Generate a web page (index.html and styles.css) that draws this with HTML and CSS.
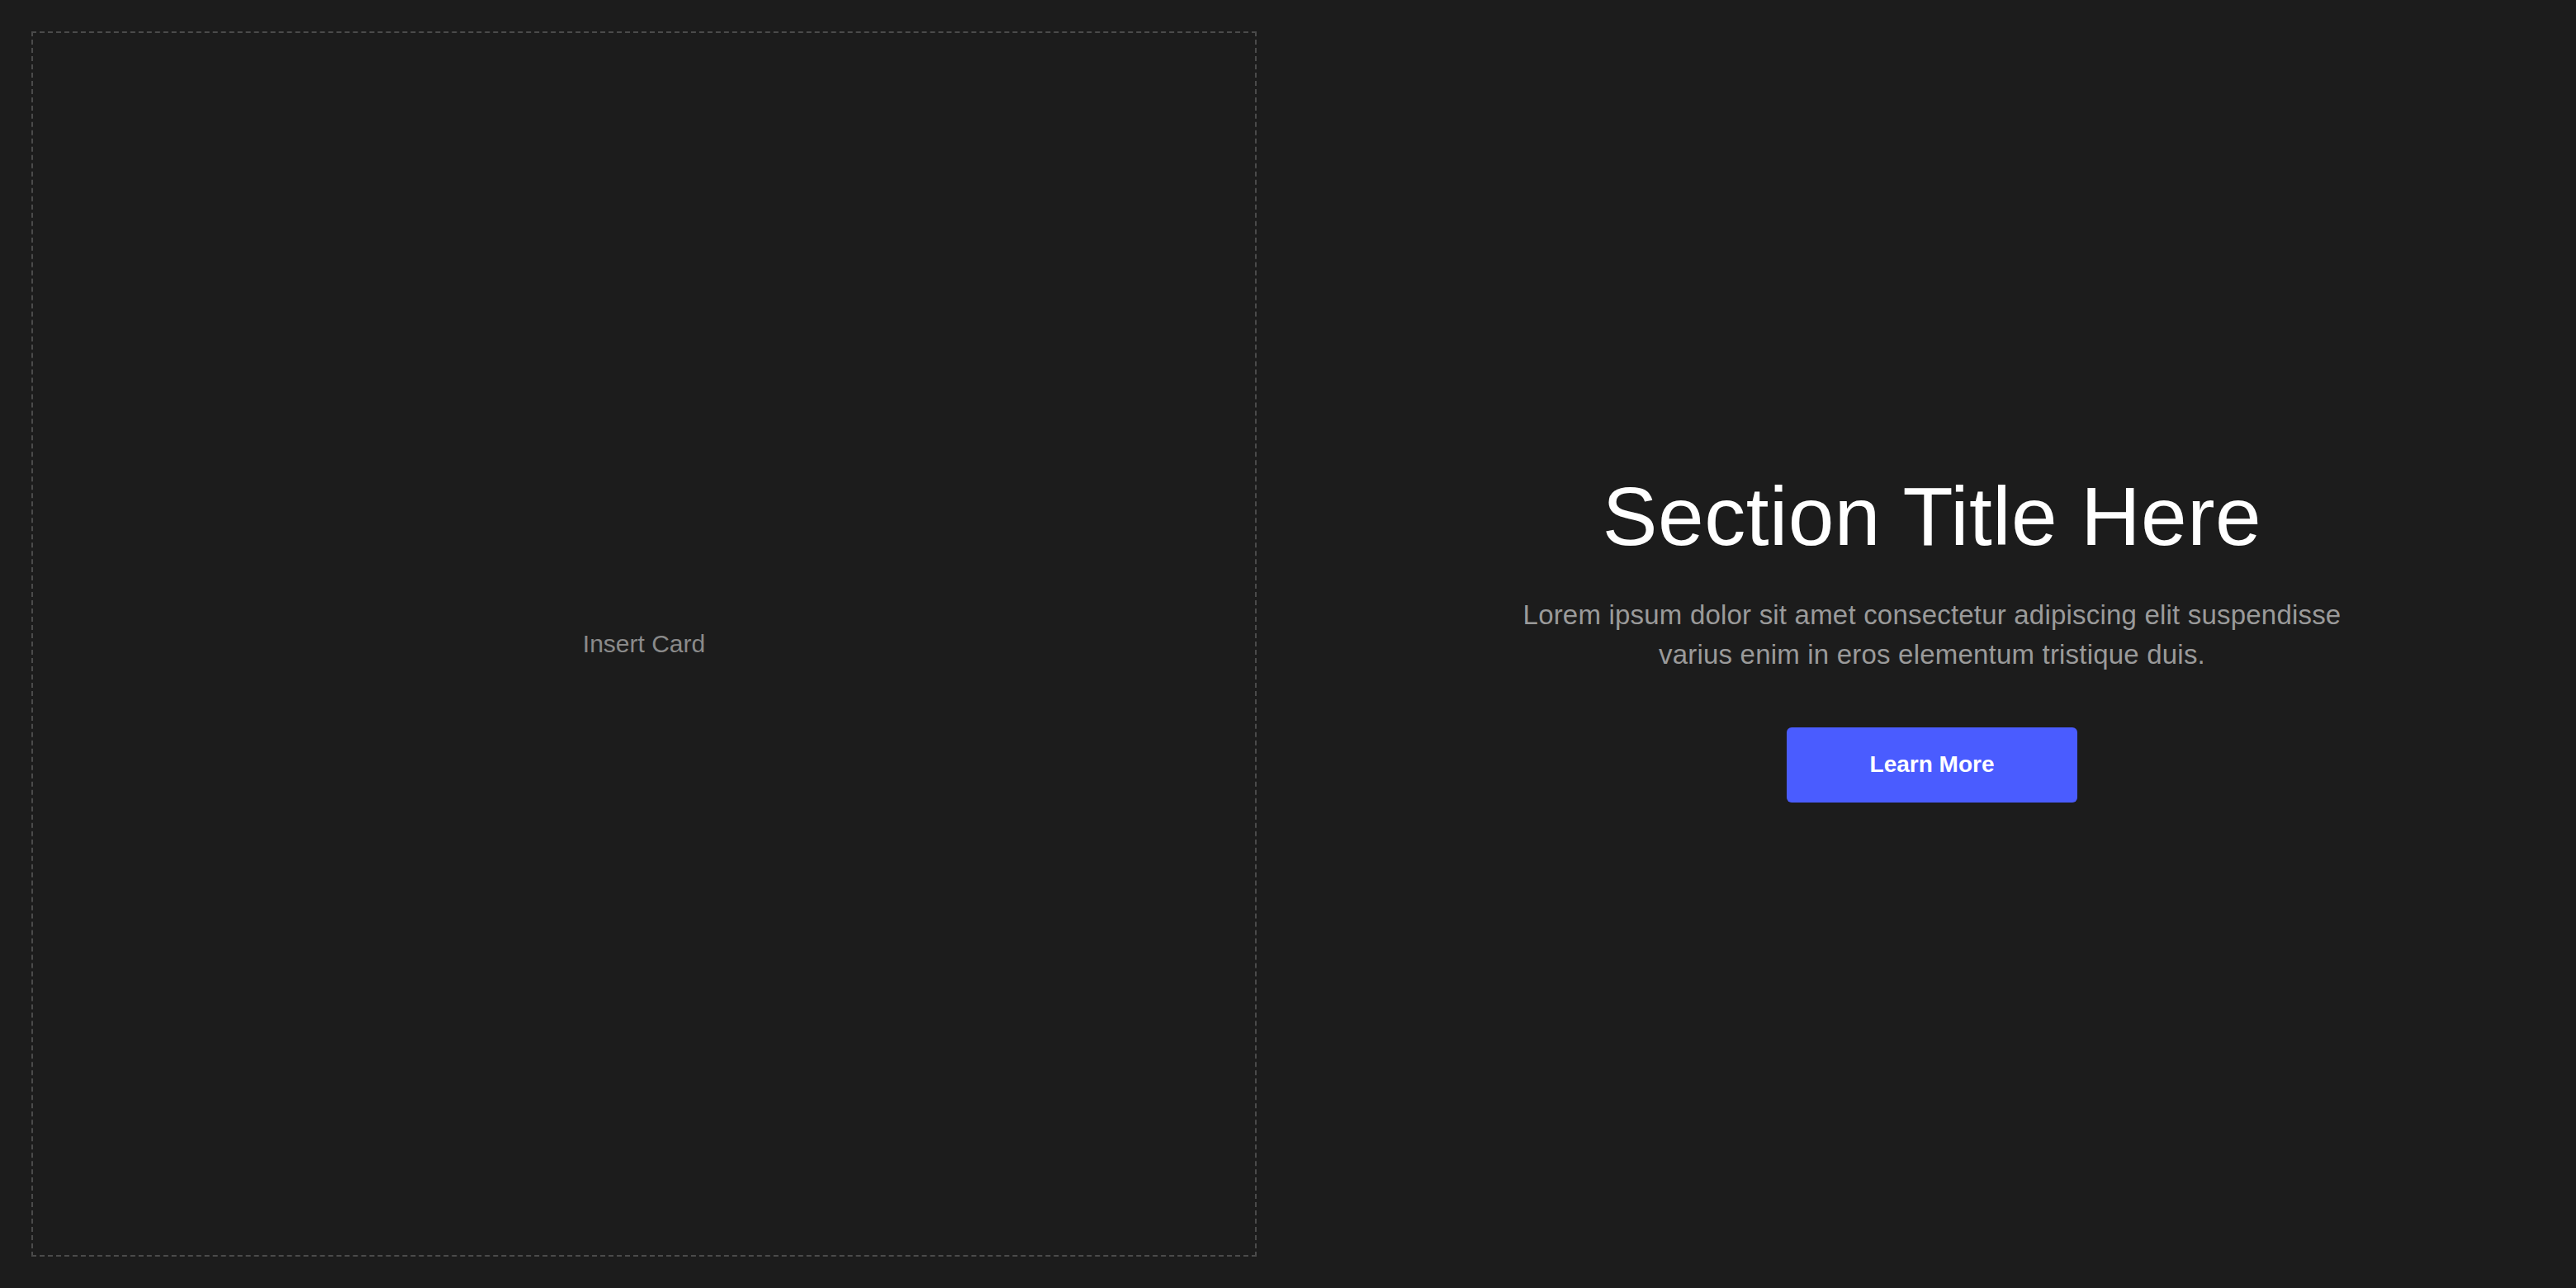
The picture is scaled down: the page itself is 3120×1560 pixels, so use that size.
FILE: index.html
```html
<!DOCTYPE html>
<html lang="en">
<head>
<meta charset="utf-8">
<title>Section</title>
<link rel="stylesheet" href="styles.css">
</head>
<body>
<section class="section">
  <div class="placeholder">
    <span class="placeholder-label">Insert Card</span>
  </div>
  <div class="content">
    <h2 class="title">Section Title Here</h2>
    <p class="lead">Lorem ipsum dolor sit amet consectetur adipiscing elit suspendisse varius enim in eros elementum tristique duis.</p>
    <a class="button" href="#">Learn More</a>
  </div>
</section>
</body>
</html>
```

FILE: styles.css
```css
* { box-sizing: border-box; }
html, body {
  margin: 0;
  padding: 0;
  background: #1c1c1c;
  font-family: "Liberation Sans", Arial, sans-serif;
}
.section {
  display: grid;
  grid-template-columns: 1fr 1fr;
  gap: 76px;
  padding: 38px;
  height: 1560px;
}
.placeholder {
  border: 2px dashed #4a4a4a;
  display: flex;
  align-items: center;
  justify-content: center;
}
.placeholder-label {
  color: #8a8a8a;
  font-size: 30px;
  line-height: 1;
}
.content {
  display: flex;
  flex-direction: column;
  align-items: center;
  justify-content: center;
  text-align: center;
  padding-bottom: 24px;
}
.title {
  margin: 0;
  color: #ffffff;
  font-size: 100px;
  font-weight: 400;
  letter-spacing: 0.5px;
  line-height: 120px;
}
.lead {
  margin: 36px 0 0;
  width: 1040px;
  color: #9a9a9a;
  font-size: 33px;
  letter-spacing: 0.2px;
  line-height: 48px;
}
.button {
  margin-top: 64px;
  width: 352px;
  height: 91px;
  display: flex;
  align-items: center;
  justify-content: center;
  background: #4a5cff;
  border-radius: 6px;
  color: #ffffff;
  text-decoration: none;
  font-size: 28px;
  font-weight: 700;
}
```
